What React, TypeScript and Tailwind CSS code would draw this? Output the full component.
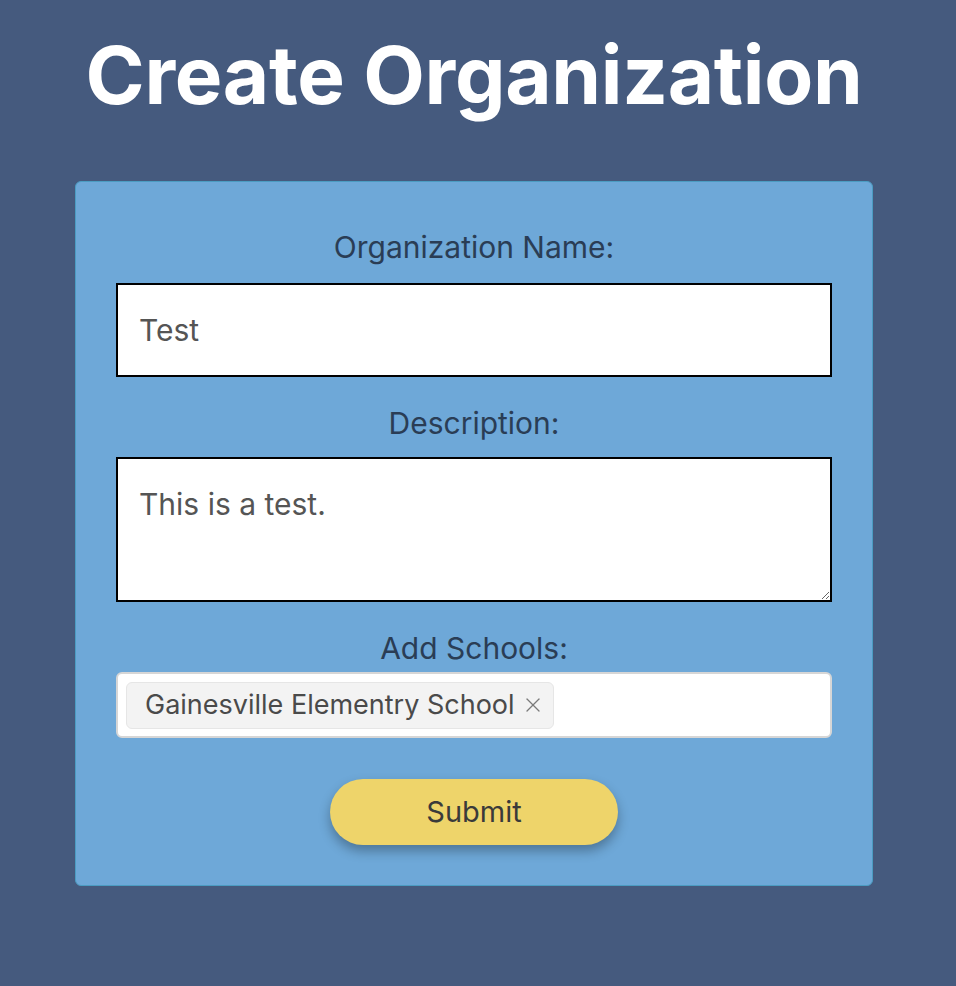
import { X } from "lucide-react";

export default function App() {
  return (
    <div className="min-h-[986px] w-full bg-[#455a7e] font-['Inter',sans-serif] flex flex-col items-center pr-[8px]">
      <h1 className="mt-[29px] text-[80px] leading-[92px] font-bold text-white tracking-[-0.3px]">
        Create Organization
      </h1>

      {/* Form card */}
      <form className="mt-[60px] w-[798px] rounded-[6px] border border-[#4b9cc2] bg-[#6ea8d8] px-[40px] pt-[48px] pb-[40px] flex flex-col items-center">
        <label className="text-[30px] leading-[34px] text-[#2a3d55]">Organization Name:</label>
        <input
          defaultValue="Test"
          className="mt-[19px] h-[94px] w-full border-2 border-black bg-white px-[21px] text-[30px] text-[#555] outline-none"
        />

        <label className="mt-[29px] text-[30px] leading-[34px] text-[#2a3d55]">Description:</label>
        <textarea
          defaultValue="This is a test."
          className="mt-[17px] h-[145px] w-full border-2 border-black bg-white px-[21px] pt-[27px] text-[30px] leading-[36px] text-[#555] outline-none"
        />

        <label className="mt-[29px] text-[30px] leading-[34px] text-[#2a3d55]">Add Schools:</label>
        <div className="mt-[7px] h-[66px] w-full rounded-[6px] border-2 border-[#d6d6d6] bg-white px-[8px] flex items-center">
          <span className="h-[47px] flex items-center gap-[6px] rounded-[6px] border border-[#e6e6e6] bg-[#f3f3f3] pl-[18px] pr-[8px] text-[27px] text-[#4a4a4a]">
            Gainesville Elementry School
            <X className="h-[24px] w-[24px] text-[#7a7a7a]" strokeWidth={1.3} />
          </span>
        </div>

        <button
          type="button"
          className="mt-[41px] h-[66px] w-[288px] rounded-full bg-[#eed46a] text-[29px] text-[#3a3a3a] shadow-[0_6px_12px_rgba(0,0,0,0.3)]"
        >
          Submit
        </button>
      </form>
    </div>
  );
}
